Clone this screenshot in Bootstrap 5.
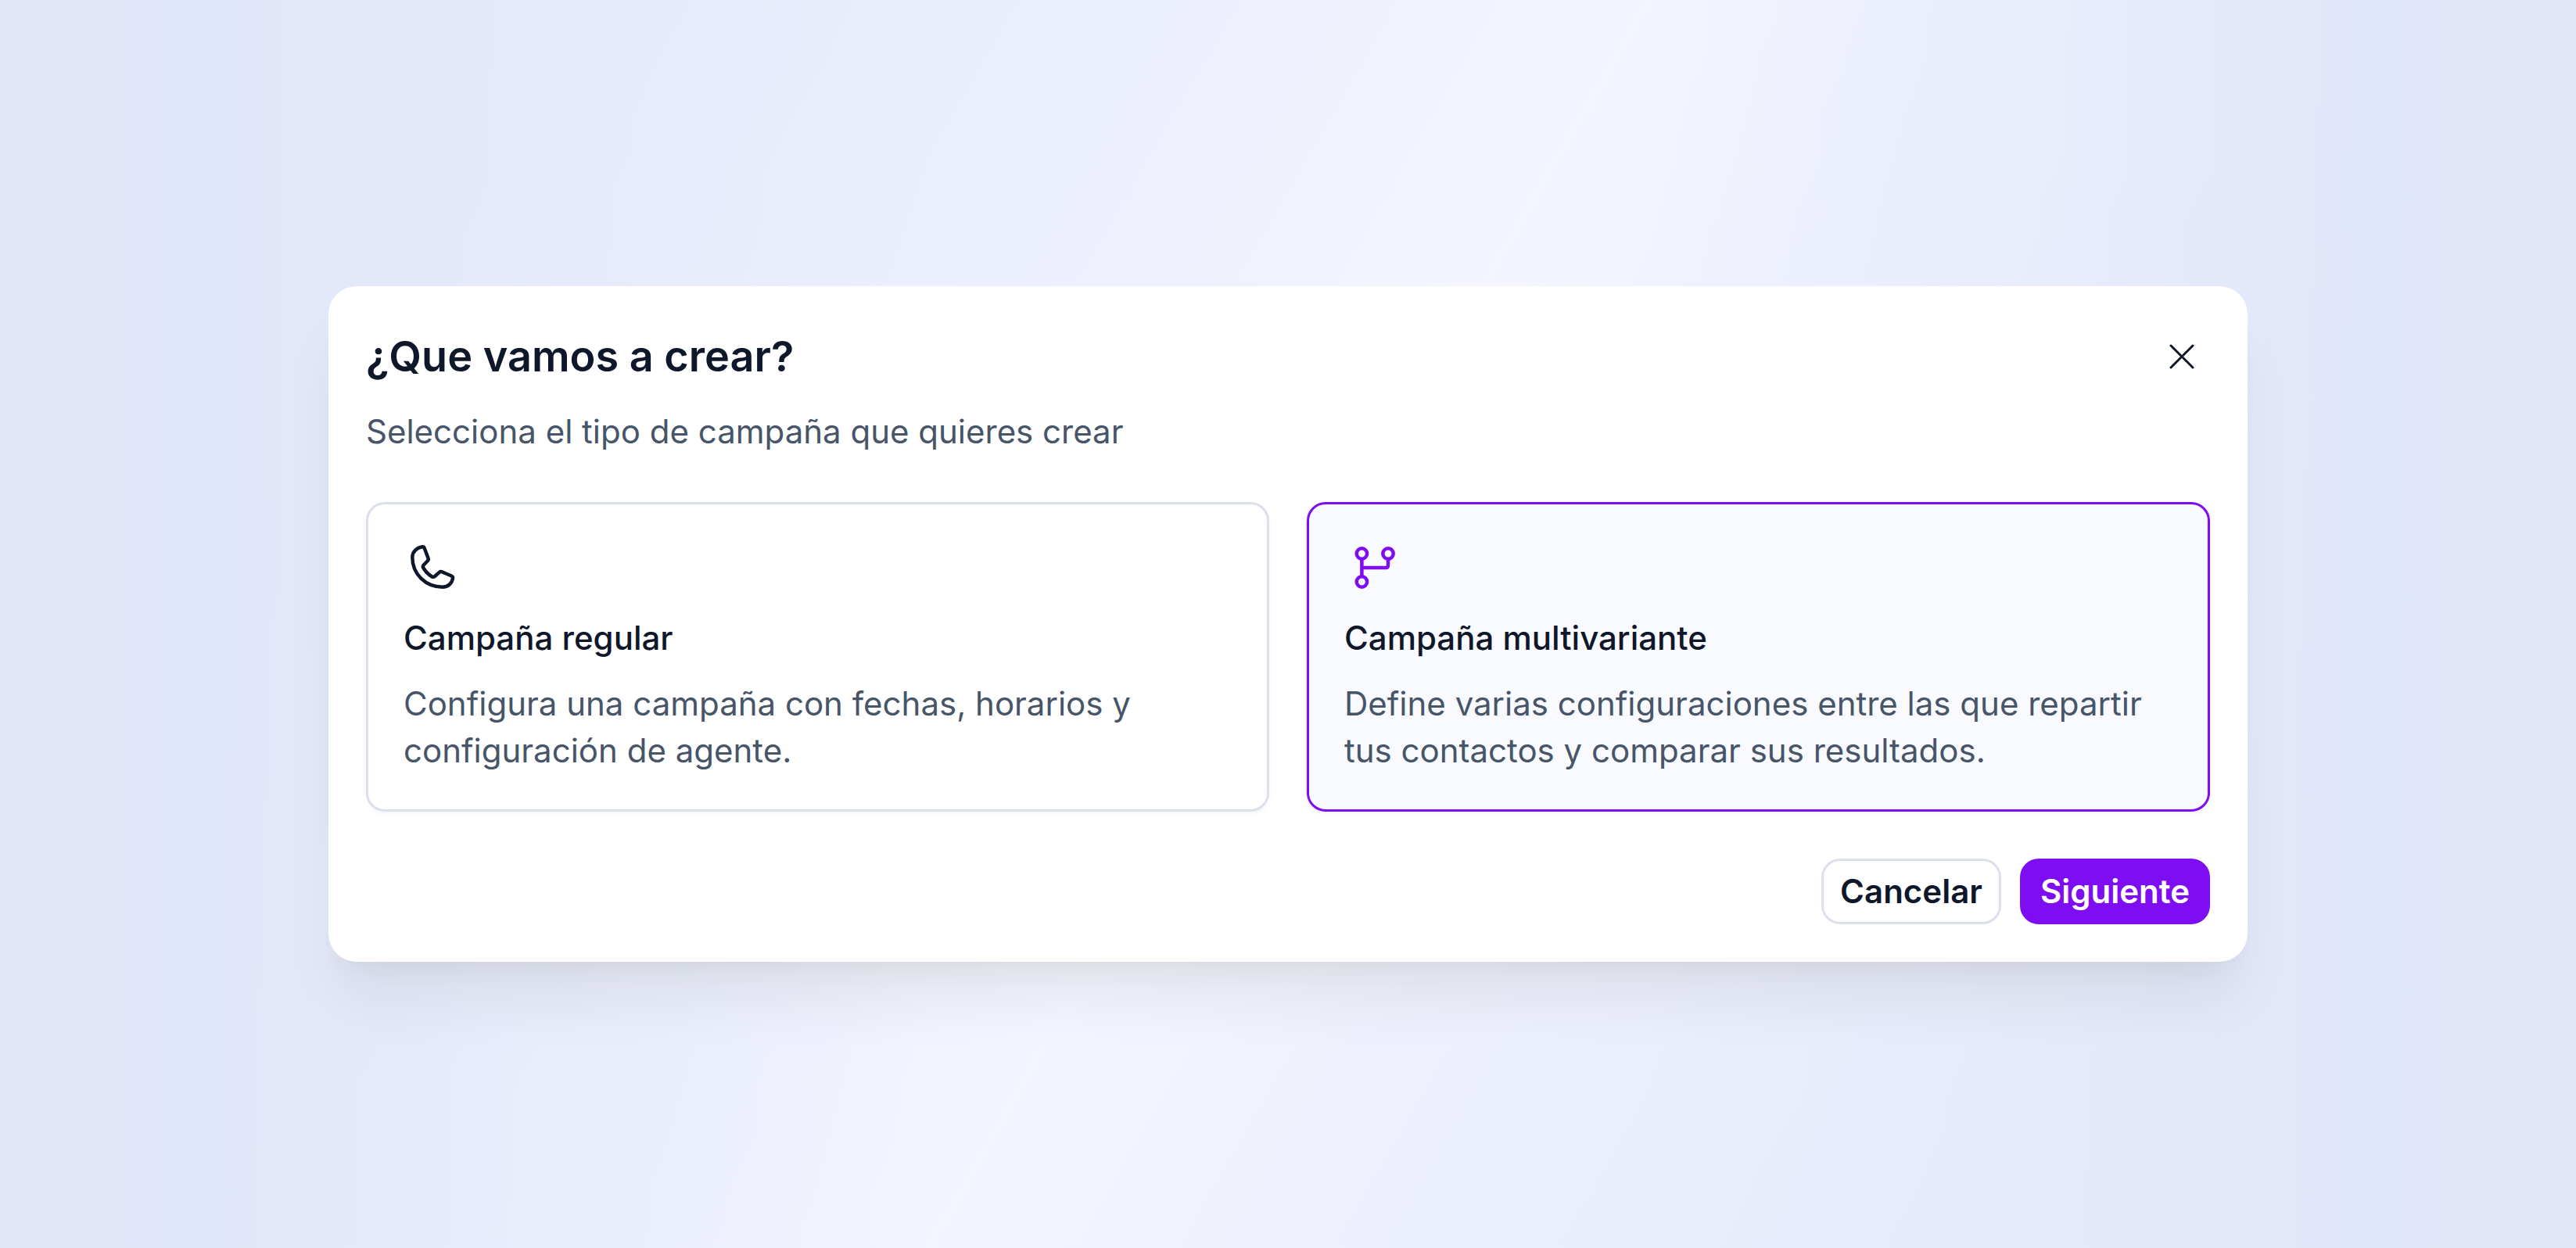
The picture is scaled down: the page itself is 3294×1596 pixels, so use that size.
<!DOCTYPE html>
<html lang="es">
<head>
<meta charset="utf-8">
<meta name="viewport" content="width=device-width, initial-scale=1">
<title>¿Que vamos a crear?</title>
<link href="https://cdn.jsdelivr.net/npm/bootstrap@5.3.0/dist/css/bootstrap.min.css" rel="stylesheet">
<style>
  :root { --ink: #0f172a; --muted: #475569; --line: #dcdfec; --brand: #7f0df2; }
  body {
    font-family: Inter, "Liberation Sans", sans-serif;
    font-size: 42px;
    line-height: 60px;
    color: var(--ink);
    background:
      linear-gradient(90deg, #e1e6f8 0%, #e1e7fa 8%, rgba(228,233,251,.5) 20%, rgba(232,236,252,0) 36%, rgba(232,236,252,0) 64%, rgba(228,233,251,.5) 80%, #e1e7fa 92%, #e1e6f8 100%),
      linear-gradient(120deg, #e6eafa 16%, #eef1fd 40%, #f4f5ff 50%, #eef1fd 60%, #e6eafa 84%);
  }
  .dialog-panel {
    width: 100%;
    max-width: 2454px;
    padding: 48px;
    border-radius: 36px;
    background: #fff;
    box-shadow: 0 60px 75px -15px rgba(50,50,20,.08), 0 24px 30px -18px rgba(50,50,20,.06);
  }
  .dialog-heading { font-size: 54px; line-height: 84px; font-weight: 600; }
  .option-title { font-weight: 500; }
  .text-soft { color: var(--muted); }
  .stack-gap { gap: 24px; }
  .section-gap { gap: 60px; }
  .close-x { width: 72px; height: 72px; color: var(--ink); }
  .glyph { width: 72px; height: 72px; display: block; }
  .options { display: grid; grid-template-columns: 1fr 1fr; gap: 48px; }
  .option {
    border: 3px solid var(--line);
    border-radius: 24px;
    padding: 45px;
    background: #fff;
    box-shadow: 0 3px 6px rgba(15,23,42,.04);
    cursor: pointer;
  }
  .btn-check:checked + .option { border-color: var(--brand); background: #f9faff; }
  .btn-check:checked + .option .glyph { color: var(--brand); }
  .action {
    --bs-btn-font-size: 42px;
    --bs-btn-line-height: 60px;
    --bs-btn-font-weight: 600;
    --bs-btn-padding-x: 21px;
    --bs-btn-padding-y: 9px;
    --bs-btn-border-width: 3px;
    --bs-btn-border-radius: 24px;
    --bs-btn-color: var(--ink);
    --bs-btn-border-color: var(--line);
  }
  .action-main {
    --bs-btn-padding-x: 23px;
    --bs-btn-color: #fff;
    --bs-btn-bg: var(--brand);
    --bs-btn-border-color: var(--brand);
  }
</style>
<script src="https://cdn.jsdelivr.net/npm/bootstrap@5.3.0/dist/js/bootstrap.bundle.min.js" defer></script>
</head>
<body>
<main class="min-vh-100 d-flex align-items-center justify-content-center">
  <form class="dialog-panel d-flex flex-column section-gap" role="dialog" aria-labelledby="dialog-title">
    <header class="d-flex flex-column stack-gap">
      <div class="d-flex justify-content-between align-items-center">
        <h1 class="dialog-heading m-0" id="dialog-title">¿Que vamos a crear?</h1>
        <button type="button" class="close-x btn border-0 p-0" aria-label="Cerrar">
          <svg class="glyph" viewBox="0 0 72 72" fill="none" stroke="currentColor" stroke-width="3" stroke-linecap="round"><path d="M22 22 50 50M50 22 22 50"/></svg>
        </button>
      </div>
      <p class="text-soft m-0">Selecciona el tipo de campaña que quieres crear</p>
    </header>

    <div class="options">
      <div class="d-flex">
        <input type="radio" class="btn-check" name="tipo" id="regular">
        <label class="option flex-fill d-flex flex-column stack-gap" for="regular">
          <svg class="glyph" viewBox="0 0 72 72" fill="none" stroke="currentColor" stroke-width="4.5" stroke-linejoin="round"><path d="M24 9.300C17 10.500 11.300 15.500 11.300 22.500C11.300 44.500 28.500 60.700 50 60.700C57 60.700 62 56 63 49.500Q63.300 47.300 61.300 46.500L49 41.200Q47.200 40.500 45.800 41.800L40 47Q38.300 48.500 36 47.200C31.500 44.500 28.200 41 25.500 36.500Q24.200 34.500 25.500 32.700L30.800 27.200Q32.300 25.700 31.500 23.800L26.700 11Q26 9 24 9.300Z"/></svg>
          <span class="option-title">Campaña regular</span>
          <span class="text-soft">Configura una campaña con fechas, horarios y configuración de agente.</span>
        </label>
      </div>
      <div class="d-flex">
        <input type="radio" class="btn-check" name="tipo" id="multivariante" checked>
        <label class="option flex-fill d-flex flex-column stack-gap" for="multivariante">
          <svg class="glyph" viewBox="0 0 72 72" fill="none" stroke="currentColor" stroke-width="4.5"><circle cx="22.400" cy="18" r="6.700"/><circle cx="56" cy="18" r="6.700"/><circle cx="22.400" cy="54" r="6.700"/><path d="M22.400 24.700V47.300M22.400 36H53Q56 36 56 33V24.700"/></svg>
          <span class="option-title">Campaña multivariante</span>
          <span class="text-soft">Define varias configuraciones entre las que repartir tus contactos y comparar sus resultados.</span>
        </label>
      </div>
    </div>

    <footer class="d-flex justify-content-end stack-gap">
      <button type="button" class="btn action">Cancelar</button>
      <button type="submit" class="btn action action-main">Siguiente</button>
    </footer>
  </form>
</main>
</body>
</html>
